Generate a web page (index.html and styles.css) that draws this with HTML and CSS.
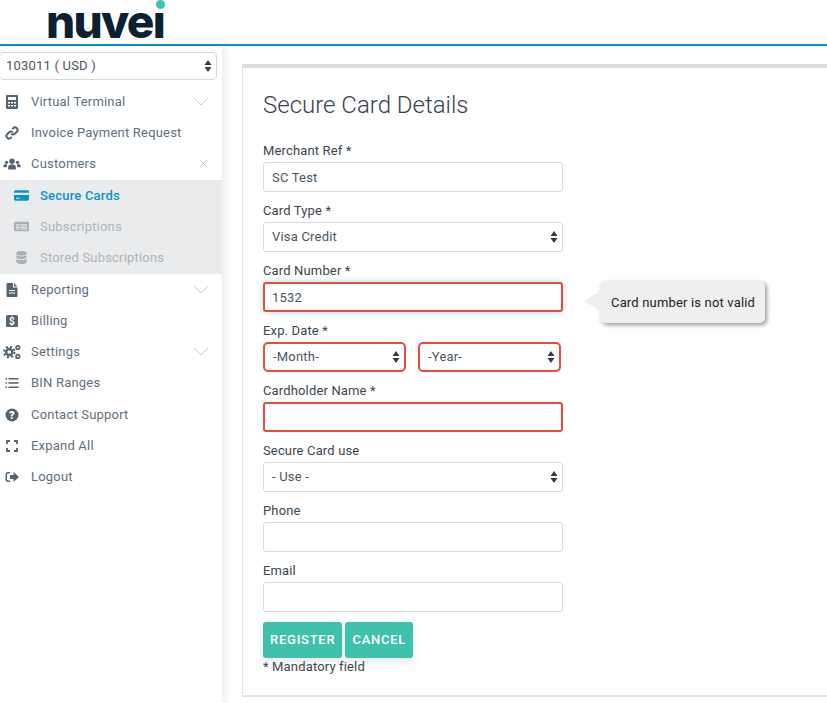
FILE: index.html
```html
<!DOCTYPE html>
<html lang="en">
<head>
    <meta charset="UTF-8">
    <meta name="viewport" content="width=device-width, initial-scale=1.0">
    <title>Secure Card Details</title>
    <link rel="stylesheet" href="styles.css">
</head>
<body>
    <header class="topbar">
        <div class="logo">nuvei<span class="logo-dot"></span></div>
    </header>

    <div class="layout">
        <aside class="sidebar">
            <div class="account">
                <select class="account-select"><option>103011 ( USD )</option></select>
            </div>
            <nav>
                <a class="nav-item">
                    <svg class="nav-icon" viewBox="0 0 16 16"><path fill-rule="evenodd" d="M3 1h10a1 1 0 0 1 1 1v12a1 1 0 0 1-1 1H3a1 1 0 0 1-1-1V2a1 1 0 0 1 1-1zm1 2v3h8V3zm0 5v1.500h2V8zm3 0v1.500h2V8zm3 0v1.500h2V8zm-6 3v1.500h2V11zm3 0v1.500h2V11zm3 0v1.500h2V11z"/></svg>
                    <span class="nav-label">Virtual Terminal</span>
                    <svg class="chevron" viewBox="0 0 16 10"><path d="M1 1l7 7 7-7"/></svg>
                </a>
                <a class="nav-item">
                    <svg class="nav-icon" viewBox="0 0 16 16"><g class="line-icon"><path d="M7.200 8.800a2.500 2.500 0 0 0 3.600 0l2-2a2.500 2.500 0 0 0-3.600-3.600L8.300 4.100"/><path d="M8.800 7.200a2.500 2.500 0 0 0-3.600 0l-2 2a2.500 2.500 0 0 0 3.600 3.600l.9-.9"/></g></svg>
                    <span class="nav-label">Invoice Payment Request</span>
                </a>
                <a class="nav-item">
                    <svg class="nav-icon nav-icon-wide" viewBox="0 0 16 16"><circle cx="8" cy="5.500" r="2.500"/><circle cx="3" cy="6.500" r="1.500"/><circle cx="13" cy="6.500" r="1.500"/><path d="M4.500 13v-1.500a3 3 0 0 1 3-3h1a3 3 0 0 1 3 3V13zM0 11V10a1.800 1.800 0 0 1 1.800-1.800h1.900A4 4 0 0 0 3.300 11zM16 11v-1a1.800 1.800 0 0 0-1.800-1.800h-1.900a4 4 0 0 1 .4 2.800z"/></svg>
                    <span class="nav-label">Customers</span>
                    <svg class="close" viewBox="0 0 10 10"><path d="M1 1l8 8M9 1l-8 8"/></svg>
                </a>
                <div class="subnav">
                    <a class="sub-item active">
                        <svg class="sub-icon" viewBox="0 0 16 16"><path fill-rule="evenodd" d="M1.500 2.500h13A1.500 1.500 0 0 1 16 4v1H0V4a1.500 1.500 0 0 1 1.500-1.500zM0 7.500h16V12a1.500 1.500 0 0 1-1.500 1.500h-13A1.500 1.500 0 0 1 0 12zm2 3v1h4v-1z"/></svg>
                        <span>Secure Cards</span>
                    </a>
                    <a class="sub-item">
                        <svg class="sub-icon" viewBox="0 0 16 16"><path fill-rule="evenodd" d="M1.500 3h13A1.500 1.500 0 0 1 16 4.500v7a1.500 1.500 0 0 1-1.500 1.500h-13A1.500 1.500 0 0 1 0 11.500v-7A1.500 1.500 0 0 1 1.500 3zM2 5.500v1.500h4V5.500zm5 0v1.500h7V5.500zM2 8v1.200h4V8zm5 0v1.200h7V8zm-5 2.200v1h4v-1zm5 0v1h7v-1z"/></svg>
                        <span>Subscriptions</span>
                    </a>
                    <a class="sub-item">
                        <svg class="sub-icon" viewBox="0 0 16 16"><ellipse cx="8" cy="3.500" rx="5.500" ry="2.500"/><path d="M2.500 5.200C3.500 7 12.500 7 13.500 5.200v2.300c0 1.400-2.500 2.300-5.500 2.300s-5.500-.9-5.500-2.300zM2.500 9.200c1 1.800 10 1.800 11 0v3.300c0 1.400-2.500 2.500-5.500 2.500s-5.500-1.100-5.500-2.500z"/></svg>
                        <span>Stored Subscriptions</span>
                    </a>
                </div>
                <a class="nav-item">
                    <svg class="nav-icon" viewBox="0 0 16 16"><path fill-rule="evenodd" d="M3.500 1H9v4.500h4.500V14a1 1 0 0 1-1 1h-9a1 1 0 0 1-1-1V2a1 1 0 0 1 1-1zM10 1l3.500 3.500H10zM5 8v1h6V8zm0 2.500v1h6v-1z"/></svg>
                    <span class="nav-label">Reporting</span>
                    <svg class="chevron" viewBox="0 0 16 10"><path d="M1 1l7 7 7-7"/></svg>
                </a>
                <a class="nav-item">
                    <svg class="nav-icon" viewBox="0 0 16 16"><rect x="2" y="2" width="12" height="12" rx="1.500"/><text class="dollar" x="8" y="11.500" text-anchor="middle">$</text></svg>
                    <span class="nav-label">Billing</span>
                </a>
                <a class="nav-item">
                    <svg class="nav-icon nav-icon-wide" viewBox="0 0 16 16"><circle class="cog-teeth" cx="5.500" cy="8" r="4.800"/><circle class="cog" cx="5.500" cy="8" r="2.800"/><circle class="cog-small" cx="13.300" cy="4" r="1.600"/><circle class="cog-small" cx="13.300" cy="12" r="1.600"/></svg>
                    <span class="nav-label">Settings</span>
                    <svg class="chevron" viewBox="0 0 16 10"><path d="M1 1l7 7 7-7"/></svg>
                </a>
                <a class="nav-item">
                    <svg class="nav-icon" viewBox="0 0 16 16"><path d="M4.500 3h10v1.500h-10zM4.500 7.200h10v1.500h-10zM4.500 11.500h10V13h-10zM1.500 3h1.500v1.500H1.500zM1.500 7.200h1.500v1.500H1.500zM1.500 11.500h1.500V13H1.500z"/></svg>
                    <span class="nav-label">BIN Ranges</span>
                </a>
                <a class="nav-item nav-gap">
                    <svg class="nav-icon" viewBox="0 0 16 16"><circle cx="8" cy="8" r="6.500"/><text class="help" x="8" y="11.800" text-anchor="middle">?</text></svg>
                    <span class="nav-label">Contact Support</span>
                </a>
                <a class="nav-item">
                    <svg class="nav-icon" viewBox="0 0 16 16"><g class="line-icon line-thick"><path d="M3 6V3h3M10 3h3v3M13 10v3h-3M6 13H3v-3"/></g></svg>
                    <span class="nav-label">Expand All</span>
                </a>
                <a class="nav-item">
                    <svg class="nav-icon" viewBox="0 0 16 16"><path d="M6 3H4a2.500 2.500 0 0 0-2.500 2.500v5A2.500 2.500 0 0 0 4 13h2v-1.600H4a1 1 0 0 1-1-1v-4.800a1 1 0 0 1 1-1h2zM9.500 3v3H6v4h3.500v3l5.500-5z"/></svg>
                    <span class="nav-label">Logout</span>
                </a>
            </nav>
        </aside>

        <main class="content">
            <section class="card">
                <h1>Secure Card Details</h1>
                <form>
                    <div class="field">
                        <label>Merchant Ref *</label>
                        <input class="control" type="text" value="SC Test">
                    </div>
                    <div class="field">
                        <label>Card Type *</label>
                        <select class="control"><option>Visa Credit</option></select>
                    </div>
                    <div class="field">
                        <label>Card Number *</label>
                        <input class="control invalid focused" type="text" value="1532">
                        <div class="tooltip">Card number is not valid</div>
                    </div>
                    <div class="field">
                        <label>Exp. Date *</label>
                        <div class="date-row">
                            <select class="control invalid"><option>-Month-</option></select>
                            <select class="control invalid"><option>-Year-</option></select>
                        </div>
                    </div>
                    <div class="field">
                        <label>Cardholder Name *</label>
                        <input class="control invalid" type="text">
                    </div>
                    <div class="field">
                        <label>Secure Card use</label>
                        <select class="control"><option>- Use -</option></select>
                    </div>
                    <div class="field">
                        <label>Phone</label>
                        <input class="control" type="text">
                    </div>
                    <div class="field">
                        <label>Email</label>
                        <input class="control" type="text">
                    </div>
                    <div class="actions">
                        <button class="btn" type="button">Register</button>
                        <button class="btn" type="button">Cancel</button>
                    </div>
                    <p class="note">* Mandatory field</p>
                </form>
            </section>
        </main>
    </div>
</body>
</html>
```

FILE: styles.css
```css
* {
    box-sizing: border-box;
}

html, body {
    height: 703px;
    overflow: hidden;
}

body {
    margin: 0;
    font-family: Roboto, "Liberation Sans", sans-serif;
    font-size: 13px;
    letter-spacing: 0.15px;
    color: #3c454e;
    background-color: #fff;
}

/* header */
.topbar {
    height: 46px;
    padding-left: 46px;
    border-bottom: 2px solid #0a94c4;
}

.logo {
    position: relative;
    width: 122px;
    height: 44px;
    font-family: Inter, sans-serif;
    font-size: 46px;
    font-weight: 800;
    line-height: 43px;
    letter-spacing: -1.7px;
    color: #0b2133;
}

/* hides the dark dot of the i, the teal one sits in its place */
.logo-dot {
    position: absolute;
    left: 105px;
    top: 0;
    width: 16px;
    height: 11px;
    background-color: #fff;
}

.logo-dot::after {
    content: "";
    position: absolute;
    left: 5px;
    top: 0;
    width: 9px;
    height: 9px;
    border-radius: 50%;
    background-color: #3fc1ac;
}

/* sidebar */
.layout {
    display: flex;
    height: 657px;
}

.sidebar {
    width: 222px;
    flex: none;
    background-color: #fff;
    box-shadow: 3px 0 8px rgba(0,0,0,0.08);
}

.account {
    padding: 6px 5px 6px 0;
    margin-left: -1px;
}

.account-select {
    display: block;
    width: 100%;
    height: 28px;
    padding: 0 6px 2px;
    border: 1px solid #d5d8db;
    border-radius: 4px;
    font-family: inherit;
    font-size: 13px;
    letter-spacing: 0.2px;
    color: #4a5560;
    appearance: none;
    background: #fff url("data:image/svg+xml,%3Csvg xmlns='http://www.w3.org/2000/svg' width='8' height='12'%3E%3Cpath fill='%23333c45' d='M4 0l3.500 5H.5zM4 12L.5 7h7z'/%3E%3C/svg%3E") no-repeat right 4px center;
}

.nav-item {
    display: flex;
    align-items: center;
    height: 31px;
    padding-left: 4px;
    color: #5f6f7e;
    letter-spacing: 0.2px;
}

.nav-gap {
    margin-top: 1px;
}

.nav-icon {
    width: 16px;
    height: 16px;
    margin-right: 11px;
    fill: #56636f;
    flex: none;
}

.nav-icon-wide {
    transform: scale(1.1);
}

.nav-label {
    flex: 1;
}

.line-icon {
    fill: none;
    stroke: #56636f;
    stroke-width: 2;
}

.line-thick {
    stroke-width: 1.800;
}

.dollar {
    font-size: 10px;
    font-weight: 700;
    fill: #fff;
}

.help {
    font-size: 11px;
    font-weight: 900;
    fill: #fff;
}

.cog {
    fill: none;
    stroke: #56636f;
    stroke-width: 2.200;
}

.cog-teeth {
    fill: none;
    stroke: #56636f;
    stroke-width: 1.800;
    stroke-dasharray: 2 1.770;
}

.cog-small {
    fill: none;
    stroke: #56636f;
    stroke-width: 1.500;
}

.chevron {
    width: 16px;
    height: 10px;
    margin-right: 13px;
    fill: none;
    stroke: #c8cdd2;
    stroke-width: 1;
}

.close {
    width: 9px;
    height: 9px;
    margin-right: 14px;
    fill: none;
    stroke: #bcc2c7;
    stroke-width: 1;
}

.subnav {
    height: 94px;
    margin-top: 1px;
    background-color: #e9ebed;
}

.sub-item {
    display: flex;
    align-items: center;
    height: 31px;
    padding-left: 14px;
    color: #aeb4ba;
    letter-spacing: 0.2px;
}

.sub-item.active {
    color: #0a94c4;
    font-weight: 500;
}

.sub-icon {
    width: 15px;
    height: 15px;
    margin-right: 11px;
    fill: #a9afb5;
    flex: none;
}

.sub-item.active .sub-icon {
    fill: #0a94c4;
}

/* main card */
.content {
    flex: 1;
    padding: 18px 0 6px 20px;
    min-width: 0;
}

.card {
    height: 633px;
    padding: 20px 20px 0 20px;
    border-top: 4px solid #dcdcdc;
    border-left: 1px solid #e4e4e4;
    border-bottom: 2px solid #e4e4e4;
}

h1 {
    margin: 0 0 18px;
    font-size: 24px;
    font-weight: 300;
    letter-spacing: 0;
    line-height: 34px;
    color: #37424c;
}

.field {
    position: relative;
    width: 300px;
    margin-bottom: 8px;
}

label {
    display: block;
    height: 20px;
    margin-bottom: 2px;
    line-height: 22px;
    color: #3c454e;
}

.control {
    display: block;
    width: 300px;
    height: 30px;
    padding: 0 8px;
    border: 1px solid #d8dadc;
    border-radius: 3px;
    font-family: inherit;
    font-size: 13px;
    letter-spacing: 0.2px;
    color: #4a5560;
    outline: none;
    background-color: #fff;
}

select.control {
    appearance: none;
    padding-bottom: 2px;
    background: #fff url("data:image/svg+xml,%3Csvg xmlns='http://www.w3.org/2000/svg' width='8' height='12'%3E%3Cpath fill='%23333c45' d='M4 0l3.500 5H.5zM4 12L.5 7h7z'/%3E%3C/svg%3E") no-repeat right 4px center;
}

.control.invalid {
    border: 2px solid #e74c3c;
    padding-left: 7px;
    padding-right: 7px;
}

.control.focused {
    box-shadow: 0 0 6px rgba(10,148,196,0.35);
}

.date-row {
    display: flex;
    gap: 12px;
    width: 298px;
}

.date-row .control {
    width: 143px;
    border-radius: 5px;
    padding-left: 8px;
}

.tooltip {
    position: absolute;
    left: 337px;
    top: 21px;
    width: 165px;
    height: 42px;
    padding-left: 11px;
    border-radius: 5px;
    line-height: 43px;
    font-size: 13px;
    letter-spacing: 0.17px;
    color: #222;
    white-space: nowrap;
    background-color: #efefef;
    box-shadow: 2px 2px 4px rgba(0,0,0,0.4);
}

.tooltip::before {
    content: "";
    position: absolute;
    left: -16px;
    top: 10px;
    border-style: solid;
    border-width: 10px 16px 10px 0;
    border-color: transparent #efefef transparent transparent;
}

.actions {
    display: flex;
    gap: 3px;
    margin-top: 10px;
}

.btn {
    height: 36px;
    padding: 0 7px 2px;
    border: none;
    border-radius: 3px;
    font-family: inherit;
    font-size: 13px;
    font-weight: 500;
    letter-spacing: 0.75px;
    text-transform: uppercase;
    color: #fff;
    background-color: #40c1ac;
    box-shadow: 0 3px 8px rgba(0,0,0,0.1);
}

.note {
    margin: 0;
    line-height: 18px;
    color: #3c454e;
}
```
